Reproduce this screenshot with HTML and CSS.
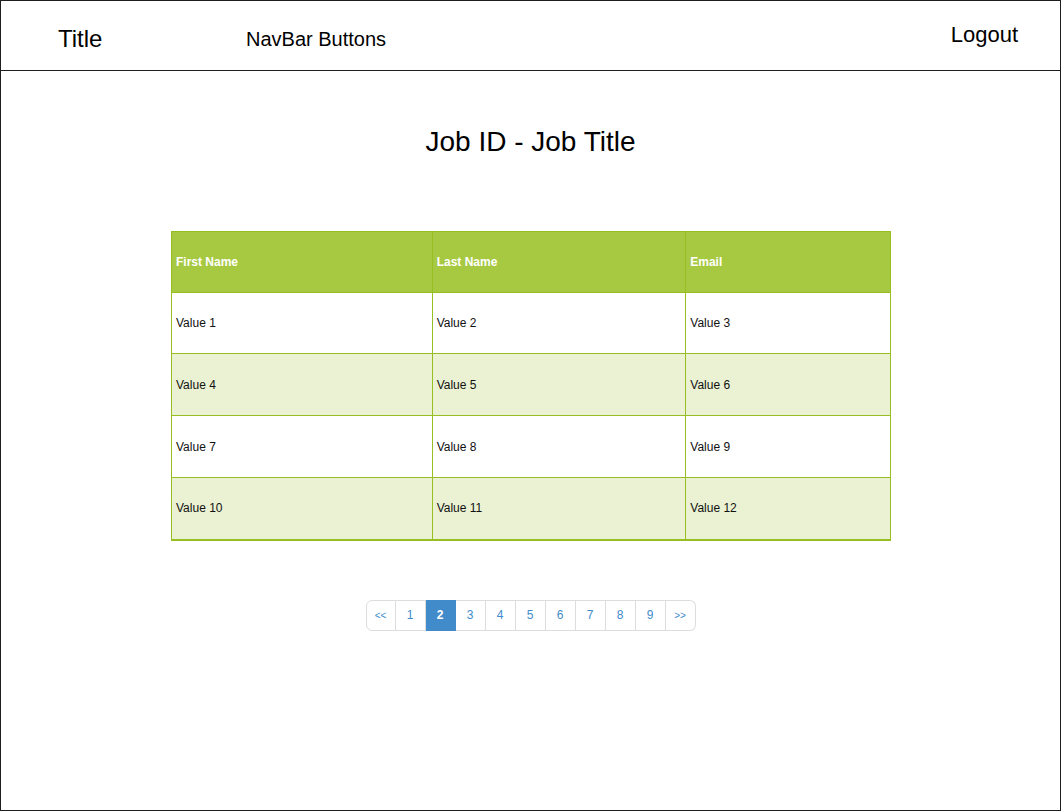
FILE: index.html
```html
<!DOCTYPE html>
<html>
<head>
<meta charset="utf-8">
<link rel="stylesheet" href="styles.css">
</head>
<body>
<div class="frame">
  <header class="nav">
    <div class="nav-title">Title</div>
    <div class="nav-links">NavBar Buttons</div>
    <div class="nav-logout">Logout</div>
  </header>
  <main class="content">
    <h1 class="job-title">Job ID - Job Title</h1>
    <table class="grid">
      <colgroup>
        <col class="c1"><col class="c2"><col class="c3">
      </colgroup>
      <thead>
        <tr><th>First Name</th><th>Last Name</th><th>Email</th></tr>
      </thead>
      <tbody>
        <tr class="first"><td>Value 1</td><td>Value 2</td><td>Value 3</td></tr>
        <tr class="alt"><td>Value 4</td><td>Value 5</td><td>Value 6</td></tr>
        <tr><td>Value 7</td><td>Value 8</td><td>Value 9</td></tr>
        <tr class="alt"><td>Value 10</td><td>Value 11</td><td>Value 12</td></tr>
      </tbody>
    </table>
    <nav class="pager">
      <a class="pg pg-edge pg-first">&lt;&lt;</a>
      <a class="pg">1</a>
      <a class="pg active">2</a>
      <a class="pg">3</a>
      <a class="pg">4</a>
      <a class="pg">5</a>
      <a class="pg">6</a>
      <a class="pg">7</a>
      <a class="pg">8</a>
      <a class="pg">9</a>
      <a class="pg pg-edge pg-last">&gt;&gt;</a>
    </nav>
  </main>
</div>
</body>
</html>
```
FILE: styles.css
```css
html, body {
  margin: 0;
  padding: 0;
  background: #fff;
}
body {
  font-family: "Liberation Sans", Arial, Helvetica, sans-serif;
  color: #000;
}
.frame {
  width: 1061px;
  height: 811px;
  box-sizing: border-box;
  border: 1px solid #1e1e1e;
  display: flex;
  flex-direction: column;
}
.nav {
  height: 70px;
  box-sizing: border-box;
  border-bottom: 1px solid #1e1e1e;
  display: flex;
  align-items: flex-start;
  flex-shrink: 0;
}
.nav-title {
  font-size: 24px;
  line-height: 24px;
  margin-top: 26px;
  margin-left: 57px;
  width: 188px;
}
.nav-links {
  font-size: 20px;
  line-height: 20px;
  margin-top: 28px;
}
.nav-logout {
  font-size: 22px;
  line-height: 22px;
  margin-top: 23px;
  margin-left: auto;
  margin-right: 42px;
}
.content {
  display: flex;
  flex-direction: column;
  align-items: center;
}
.job-title {
  margin: 57px 0 0 0;
  font-size: 28px;
  line-height: 28px;
  font-weight: normal;
}
.grid {
  margin-top: 75px;
  margin-left: 1px;
  width: 720px;
  border-collapse: collapse;
  border: 1px solid #98bf21;
  border-bottom-width: 2px;
  font-size: 12px;
}
.grid col.c1 { width: 261px; }
.grid col.c2 { width: 254px; }
.grid col.c3 { width: 205px; }
.grid th, .grid td {
  border: 1px solid #98bf21;
  height: 62px;
  padding: 0 4px;
  text-align: left;
  box-sizing: border-box;
}
.grid th {
  background: #a7c942;
  color: #fff;
  font-weight: bold;
  height: 61px;
}
.grid tr.first td {
  height: 61px;
}
.grid td {
  color: #111;
  background: #fff;
}
.grid tr.alt td {
  background: #eaf2d3;
}
.pager {
  margin-top: 59px;
  display: flex;
}
.pg {
  width: 30px;
  height: 31px;
  box-sizing: border-box;
  border: 1px solid #dddddd;
  border-left: none;
  display: flex;
  align-items: center;
  justify-content: center;
  font-size: 12px;
  color: #428bca;
  background: #fff;
}
.pg-first {
  border-left: 1px solid #dddddd;
  border-radius: 6px 0 0 6px;
}
.pg-last {
  border-radius: 0 6px 6px 0;
}
.pg-edge {
  font-size: 10px;
}
.pg.active {
  background: #428bca;
  border-color: #428bca;
  color: #fff;
  font-weight: bold;
}
```
